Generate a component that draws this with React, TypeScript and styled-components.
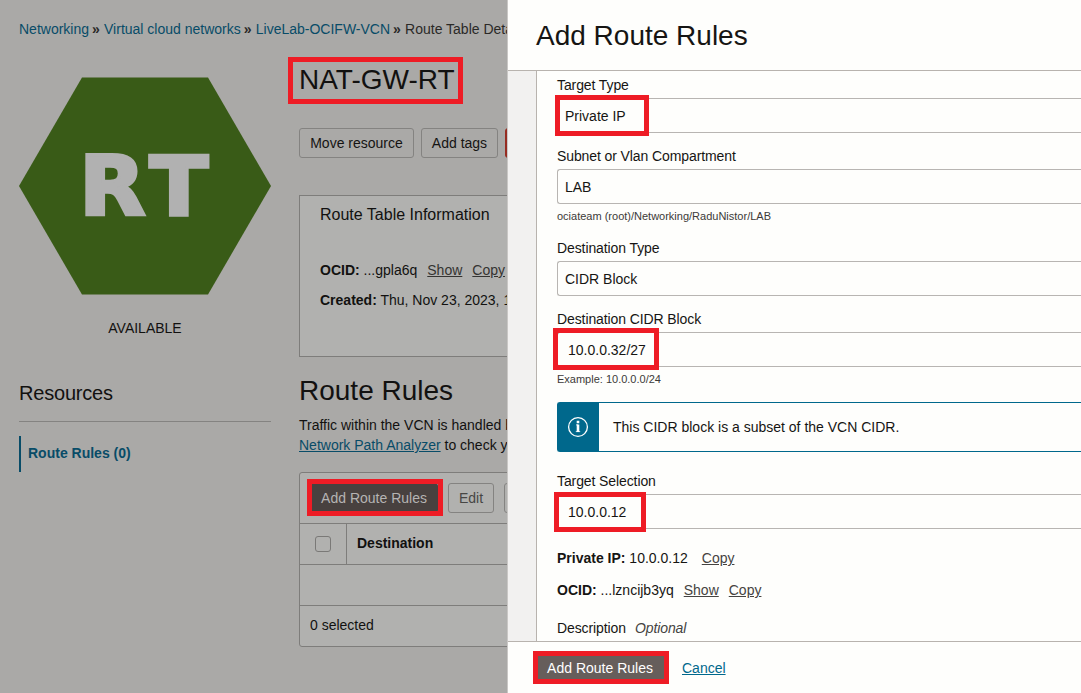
import React from "react";
import styled, { createGlobalStyle, css } from "styled-components";

const GlobalStyle = createGlobalStyle`
  * { box-sizing: border-box; }
  html, body { margin: 0; padding: 0; overflow: hidden; }
  body {
    font-family: "Liberation Sans", Arial, sans-serif;
    font-size: 14px;
    line-height: 20px;
    color: #121110;
    background: #aaa9a7;
  }
  h1, h2, h3, p { margin: 0; font-weight: 400; }
`;

const Screen = styled.div`
  position: relative;
  display: grid;
  grid-template-columns: 507px 574px;
  width: 1081px;
  height: 693px;
  overflow: hidden;
`;

const Page = styled.main`
  min-width: 0;
  overflow: hidden;
  white-space: nowrap;
  background: #aaa9a7;
`;

const Breadcrumb = styled.nav`
  padding: 19px 0 0 19px;
  height: 57px;
  color: #2a2927;
`;

const Crumb = styled.a`
  color: #084c68;
`;

const Separator = styled.span`
  display: inline-block;
  width: 15px;
  padding-left: 3px;
  font-size: 14px;
  font-weight: 700;
  line-height: 16px;
`;

const Columns = styled.div`
  display: grid;
  grid-template-columns: 252px 400px;
  column-gap: 28px;
  padding-left: 19px;
`;

const Side = styled.aside`
  padding-top: 20px;
`;

const Hexagon = styled.svg`
  display: block;
`;

const Status = styled.p`
  margin-top: 23px;
  text-align: center;
`;

const SideTitle = styled.h3`
  margin-top: 41px;
  padding-bottom: 14px;
  font-size: 20px;
  line-height: 28px;
  letter-spacing: -0.2px;
  border-bottom: 1px solid #848381;
`;

const SideLink = styled.a`
  display: block;
  margin-top: 14px;
  padding: 7px 0 0 7px;
  height: 36px;
  border-left: 2px solid #084c68;
  color: #084c68;
  font-weight: 700;
`;

const Main = styled.section`
  min-width: 0;
`;

const Title = styled.h1`
  height: 71px;
  padding-top: 5px;
  font-size: 28px;
  line-height: 36px;
`;

const ButtonRow = styled.div`
  display: flex;
  gap: 7px;
`;

const variants = {
  outline: css`
    border: 1px solid #848381;
    color: #151413;
  `,
  muted: css`
    border: 1px solid #848381;
    color: #474644;
  `,
  danger: css`
    border: 1px solid #962c22;
    background: #962c22;
    color: #b1b1af;
  `,
  shaded: css`
    border: 1px solid #48413f;
    background: #48413f;
    color: #b5b4b3;
  `,
  primary: css`
    border: 1px solid #665e5b;
    background: #665e5b;
    color: #fff;
  `,
};

const Button = styled.button<{ $variant: keyof typeof variants; $width: number }>`
  flex: none;
  width: ${(p) => p.$width}px;
  height: 30px;
  padding: 0;
  border-radius: 3px;
  background: transparent;
  font: inherit;
  white-space: nowrap;
  ${(p) => variants[p.$variant]}
`;

const InfoCard = styled.div`
  height: 162px;
  margin-top: 37px;
  padding: 8px 0 0 20px;
  border: 1px solid #7e7d7b;
  background: #b1b1af;
`;

const CardTitle = styled.h3`
  font-size: 16px;
  line-height: 22px;
  margin-bottom: 34px;
`;

const Detail = styled.p<{ $gap?: number }>`
  display: flex;
  height: 20px;
  margin-bottom: ${(p) => p.$gap ?? 10}px;
  white-space: pre;
`;

const Action = styled.a<{ $left?: number; $shaded?: boolean }>`
  margin-left: ${(p) => p.$left ?? 10}px;
  color: ${(p) => (p.$shaded ? "#353432" : "#454341")};
  text-decoration: underline;
`;

const SectionTitle = styled.h2`
  margin-top: 16px;
  font-size: 28px;
  line-height: 36px;
`;

const Paragraph = styled.p`
  margin-top: 6px;
`;

const TextLink = styled.a<{ $bright?: boolean }>`
  color: ${(p) => (p.$bright ? "#00688c" : "#084c68")};
  text-decoration: underline;
`;

const Table = styled.div`
  margin-top: 17px;
  border: 1px solid #7e7d7b;
  border-radius: 3px;
  background: #b1b1af;
`;

const Toolbar = styled.div`
  display: flex;
  gap: 10px;
  height: 51px;
  padding: 10px 0 0 10px;
  border-bottom: 1px solid #7e7d7b;
`;

const HeadRow = styled.div`
  display: flex;
  height: 41px;
  border-bottom: 1px solid #7e7d7b;
  font-weight: 700;
`;

const CheckCell = styled.div`
  width: 47px;
  padding: 12px 0 0 15px;
  border-right: 1px solid #7e7d7b;
`;

const Checkbox = styled.span`
  display: block;
  width: 16px;
  height: 16px;
  border: 1px solid #7a7977;
  border-radius: 3px;
`;

const HeadCell = styled.div`
  padding: 9px 10px;
`;

const EmptyRow = styled.div`
  height: 41px;
  border-bottom: 1px solid #7e7d7b;
`;

const TableFooter = styled.div`
  height: 40px;
  padding: 9px 10px;
`;

const Drawer = styled.section`
  display: flex;
  flex-direction: column;
  height: 693px;
  min-width: 0;
  border-left: 1px solid #c9c7c5;
  background: #fefefc;
  color: #161513;
`;

const DrawerHeader = styled.header`
  flex: none;
  height: 71px;
  padding: 18px 28px 0;
  border-bottom: 1px solid #b8b3ae;
`;

const DrawerTitle = styled.h2`
  font-size: 28px;
  line-height: 36px;
`;

const DrawerBody = styled.div`
  flex: 1;
  min-height: 0;
  padding-left: 28px;
  background: #f2f1f0;
  overflow: hidden;
`;

const Form = styled.div`
  height: 100%;
  padding: 4px 0 0 20px;
  border-left: 1px solid #b8b3ae;
  background: #fefefc;
`;

const Field = styled.div<{ $height: number }>`
  height: ${(p) => p.$height}px;
`;

const Label = styled.label`
  display: block;
  height: 20px;
  letter-spacing: -0.1px;
`;

const Input = styled.div<{ $indent?: number }>`
  height: 35px;
  margin-top: 3px;
  padding: 7px 0 0 ${(p) => p.$indent ?? 7}px;
  border: 1px solid #b8b5b2;
  border-right: 0;
  border-radius: 3px 0 0 3px;
`;

const Hint = styled.p`
  margin-top: 4px;
  font-size: 11px;
  line-height: 16px;
  color: #3c3a38;
`;

const Notice = styled.div`
  display: flex;
  height: 50px;
  margin-bottom: 19px;
  border: 1px solid #00688c;
  border-right: 0;
  border-radius: 3px 0 0 3px;
`;

const NoticeIcon = styled.div`
  display: flex;
  align-items: center;
  justify-content: center;
  width: 41px;
  padding-right: 1px;
  background: #00688c;
`;

const NoticeText = styled.p`
  padding: 14px;
`;

const Optional = styled.em`
  margin-left: 9px;
  color: #454341;
`;

const DrawerFooter = styled.footer`
  display: flex;
  flex: none;
  align-items: center;
  gap: 18px;
  height: 52px;
  padding: 0 0 0 28px;
  border-top: 1px solid #b8b3ae;
`;

const Highlight = styled.div<{ $x: number; $y: number; $w: number; $h: number }>`
  position: absolute;
  left: ${(p) => p.$x}px;
  top: ${(p) => p.$y}px;
  width: ${(p) => p.$w}px;
  height: ${(p) => p.$h}px;
  border: 5px solid #ee1c25;
  pointer-events: none;
`;

const highlights = [
  [288, 57, 175, 47],
  [555, 95, 94, 41],
  [553, 328, 106, 42],
  [554, 492, 92, 40],
  [533, 651, 136, 33],
  [307, 479, 136, 37],
];

export default function App() {
  return (
    <Screen>
      <GlobalStyle />
      <Page>
        <Breadcrumb>
          <Crumb>Networking</Crumb>
          <Separator>»</Separator>
          <Crumb>Virtual cloud networks</Crumb>
          <Separator>»</Separator>
          <Crumb>LiveLab-OCIFW-VCN</Crumb>
          <Separator>»</Separator>
          Route Table Details
        </Breadcrumb>
        <Columns>
          <Side>
            <Hexagon width="252" height="218" viewBox="0 0 252 218">
              <path d="M0 109 63 .5h126L252 109l-63 108.5H63Z" fill="#395b17" />
              <text
                y="138.3"
                transform="scale(1.05 1)"
                fontFamily="DejaVu Sans, Verdana, sans-serif"
                fontWeight="700"
                fontSize="81.8"
                fill="#b1b1b1"
                stroke="#b1b1b1"
                strokeWidth="3.4"
              >
                <tspan x="57.3">R</tspan>
                <tspan x="124.2">T</tspan>
              </text>
            </Hexagon>
            <Status>AVAILABLE</Status>
            <SideTitle>Resources</SideTitle>
            <SideLink>Route Rules (0)</SideLink>
          </Side>
          <Main>
            <Title>NAT-GW-RT</Title>
            <ButtonRow>
              <Button $variant="outline" $width={115}>Move resource</Button>
              <Button $variant="outline" $width={77}>Add tags</Button>
              <Button $variant="danger" $width={80} aria-label="Terminate" />
            </ButtonRow>
            <InfoCard>
              <CardTitle>Route Table Information</CardTitle>
              <Detail>
                <b>OCID:</b> ...gpla6q
                <Action $shaded>Show</Action>
                <Action $shaded>Copy</Action>
              </Detail>
              <Detail>
                <b>Created:</b> Thu, Nov 23, 2023, 1
              </Detail>
            </InfoCard>
            <SectionTitle>Route Rules</SectionTitle>
            <Paragraph>
              Traffic within the VCN is handled by
              <br />
              <TextLink>Network Path Analyzer</TextLink> to check your
            </Paragraph>
            <Table>
              <Toolbar>
                <Button $variant="shaded" $width={128}>Add Route Rules</Button>
                <Button $variant="muted" $width={46}>Edit</Button>
                <Button $variant="muted" $width={70} aria-label="Remove" />
              </Toolbar>
              <HeadRow>
                <CheckCell>
                  <Checkbox />
                </CheckCell>
                <HeadCell>Destination</HeadCell>
              </HeadRow>
              <EmptyRow />
              <TableFooter>0 selected</TableFooter>
            </Table>
          </Main>
        </Columns>
      </Page>
      <Drawer>
        <DrawerHeader>
          <DrawerTitle>Add Route Rules</DrawerTitle>
        </DrawerHeader>
        <DrawerBody>
          <Form>
            <Field $height={71}>
              <Label>Target Type</Label>
              <Input>Private IP</Input>
            </Field>
            <Field $height={92}>
              <Label>Subnet or Vlan Compartment</Label>
              <Input>LAB</Input>
              <Hint>ociateam (root)/Networking/RaduNistor/LAB</Hint>
            </Field>
            <Field $height={71}>
              <Label>Destination Type</Label>
              <Input>CIDR Block</Input>
            </Field>
            <Field $height={93}>
              <Label>Destination CIDR Block</Label>
              <Input $indent={10}>10.0.0.32/27</Input>
              <Hint>Example: 10.0.0.0/24</Hint>
            </Field>
            <Notice>
              <NoticeIcon>
                <svg width="22" height="22" viewBox="0 0 22 22" fill="none" stroke="#fff">
                  <circle cx="11" cy="11" r="9.4" strokeWidth="1.3" />
                  <path d="M11 8.5v7.5M11 4.8v2.4" strokeWidth="2.6" />
                  <path d="M9 8.9h2M8.8 15.6h4.4" strokeWidth="0.8" />
                </svg>
              </NoticeIcon>
              <NoticeText>This CIDR block is a subset of the VCN CIDR.</NoticeText>
            </Notice>
            <Field $height={77}>
              <Label>Target Selection</Label>
              <Input $indent={10}>10.0.0.12</Input>
            </Field>
            <Detail $gap={12}>
              <b>Private IP:</b> 10.0.0.12
              <Action $left={14}>Copy</Action>
            </Detail>
            <Detail $gap={18}>
              <b>OCID:</b> ...lzncijb3yq
              <Action>Show</Action>
              <Action>Copy</Action>
            </Detail>
            <Label>
              Description<Optional>Optional</Optional>
            </Label>
          </Form>
        </DrawerBody>
        <DrawerFooter>
          <Button $variant="primary" $width={128}>Add Route Rules</Button>
          <TextLink $bright>Cancel</TextLink>
        </DrawerFooter>
      </Drawer>
      {highlights.map(([x, y, w, h]) => (
        <Highlight key={`${x}-${y}`} $x={x} $y={y} $w={w} $h={h} />
      ))}
    </Screen>
  );
}
